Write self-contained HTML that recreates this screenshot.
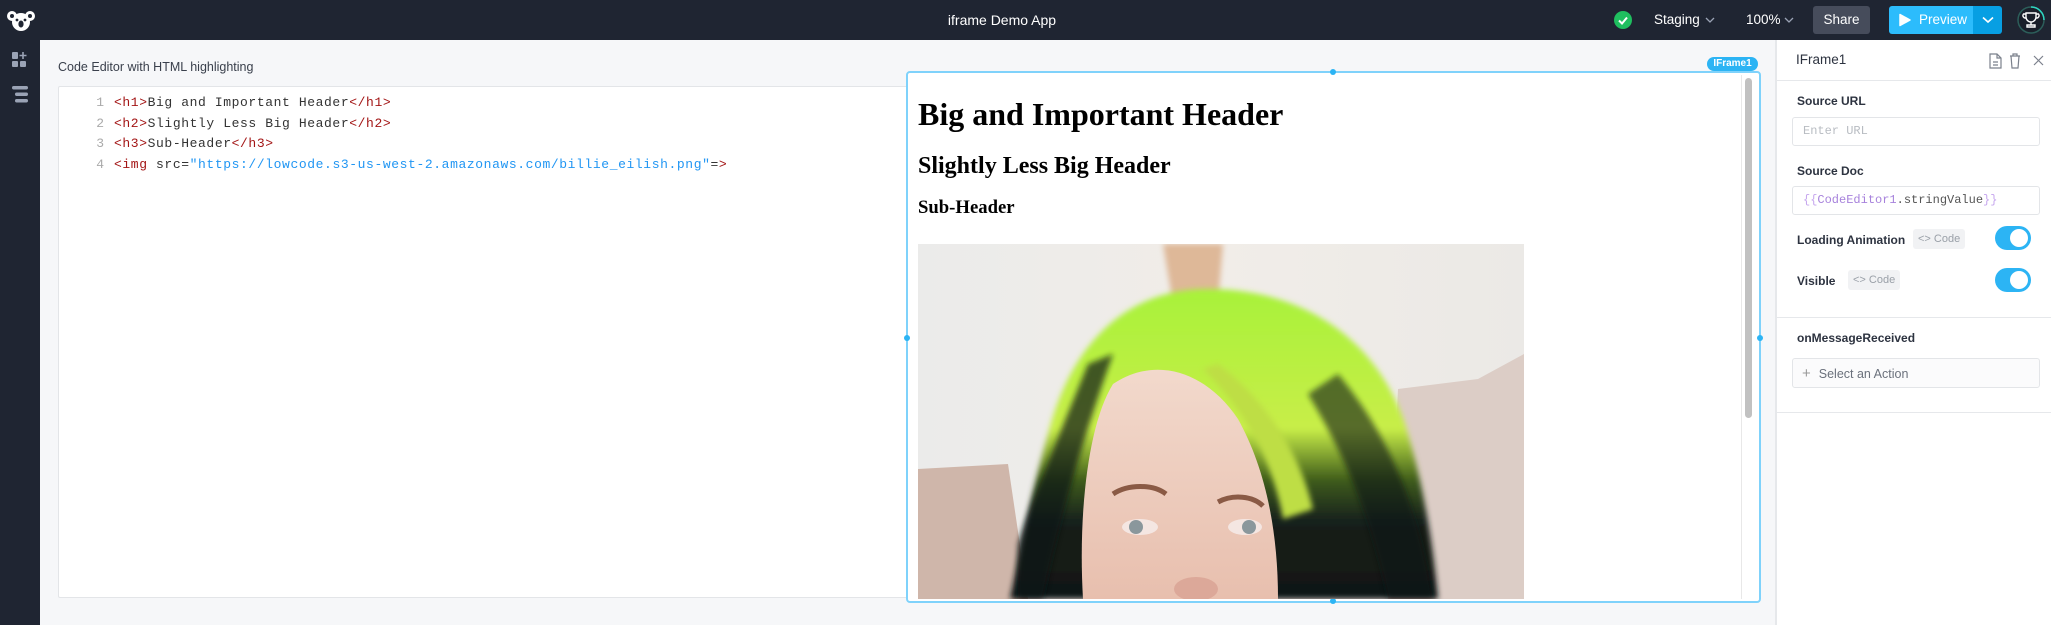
<!DOCTYPE html>
<html><head><meta charset="utf-8"><style>
*{box-sizing:border-box;margin:0;padding:0}
body{width:2051px;height:625px;overflow:hidden;background:#f6f7f9;font-family:"Liberation Sans",sans-serif;position:relative}
.a{position:absolute}
.top{left:0;top:0;width:2051px;height:40px;background:#1f2532}
.side{left:0;top:40px;width:40px;height:585px;background:#1f2532}
.tw{color:#fff;font-size:14px}
.code{font-family:"Liberation Mono",monospace;font-size:13px;line-height:20.5px;letter-spacing:0.6px}
.ln{color:#aaa;display:inline-block;width:14px;text-align:right;margin-right:10px;letter-spacing:0}
.t{color:#a31515}.s{color:#2196f3}
.lab{font-size:12px;color:#2d3340;font-weight:bold}
.inp{border:1px solid #e3e5e8;border-radius:3px;background:#fff}
.chip{background:#f1f2f4;border-radius:3px;color:#9aa0a8;font-size:11px;height:20px;line-height:20px;padding:0 5px}
.tog{width:36px;height:24px;border-radius:12px;background:#2cb4f4}
.tog::after{content:"";position:absolute;right:3px;top:3px;width:18px;height:18px;border-radius:50%;background:#fff}
.hd{width:6px;height:6px;border-radius:50%;background:#2cb4f4}
</style></head><body>
<div class="a top"></div>
<div class="a side"></div>
<svg class="a" style="left:7px;top:10px" width="28" height="22" viewBox="0 0 28 22"><circle cx="5" cy="6" r="5" fill="#fff"/><circle cx="23" cy="6" r="5" fill="#fff"/><ellipse cx="14" cy="12" rx="9" ry="9" fill="#fff"/><circle cx="5" cy="6" r="2" fill="#1f2532"/><circle cx="23" cy="6" r="2" fill="#1f2532"/><circle cx="10" cy="10" r="1.4" fill="#1f2532"/><circle cx="18" cy="10" r="1.4" fill="#1f2532"/><ellipse cx="14" cy="14" rx="2.6" ry="3.5" fill="#1f2532"/></svg>
<svg class="a" style="left:12px;top:52px" width="16" height="16" viewBox="0 0 16 16" fill="#9aa3b5"><rect x="0" y="0" width="6" height="7" rx="1"/><rect x="0" y="9" width="6" height="6" rx="1"/><rect x="8" y="9" width="6" height="6" rx="1"/><path d="M11 0v7M7.5 3.5h7" stroke="#9aa3b5" stroke-width="1.6"/></svg>
<svg class="a" style="left:12px;top:86px" width="16" height="18" viewBox="0 0 16 18" fill="#9aa3b5"><rect x="0" y="0" width="16" height="3.5" rx="1.7"/><rect x="3" y="6.5" width="13" height="3.5" rx="1.7"/><rect x="3" y="13" width="13" height="3.5" rx="1.7"/></svg>
<div class="a tw" style="left:0;width:2004px;top:12px;text-align:center">iframe Demo App</div>
<svg class="a" style="left:1614px;top:11px" width="18" height="18"><circle cx="9" cy="9" r="9" fill="#1fbf5f"/><path d="M5 9.5l3 3 5-6" stroke="#fff" stroke-width="2" fill="none"/></svg>
<div class="a tw" style="left:1654px;top:12px;font-size:13.5px">Staging</div>
<svg class="a" style="left:1705px;top:16px" width="10" height="8"><path d="M1 2l4 4 4-4" stroke="#9aa3b5" fill="none" stroke-width="1.3"/></svg>
<div class="a tw" style="left:1746px;top:12px;font-size:13.5px">100%</div>
<svg class="a" style="left:1784px;top:16px" width="10" height="8"><path d="M1 2l4 4 4-4" stroke="#9aa3b5" fill="none" stroke-width="1.3"/></svg>
<div class="a tw" style="left:1813px;top:6px;width:57px;height:28px;background:#464c5b;border-radius:3px;text-align:center;line-height:28px;font-size:13.5px">Share</div>
<div class="a" style="left:1889px;top:6px;width:84px;height:28px;background:#2cbcfc;border-radius:3px 0 0 3px"></div>
<div class="a" style="left:1973px;top:6px;width:29px;height:28px;background:#079fe3;border-radius:0 3px 3px 0"></div>
<svg class="a" style="left:1899px;top:13px" width="12" height="14"><path d="M1 1.5l10 5.5-10 5.5z" fill="#fff" stroke="#fff" stroke-linejoin="round" stroke-width="1.5"/></svg>
<div class="a tw" style="left:1919px;top:12px;font-size:13.5px">Preview</div>
<svg class="a" style="left:1982px;top:16px" width="12" height="8"><path d="M1 1.5l5 4.5 5-4.5" stroke="#fff" fill="none" stroke-width="1.6"/></svg>
<svg class="a" style="left:2016px;top:5px" width="30" height="30"><circle cx="15" cy="15" r="13" fill="#1a1f2a" stroke="#2c5e5a" stroke-width="1.5"/><path d="M15 2a13 13 0 0 1 13 13" stroke="#2ed6c1" stroke-width="1.5" fill="none"/><path d="M10 8h10v4a5 5 0 0 1-10 0zM10 9H7.5a2.5 2.5 0 0 0 2.5 4M20 9h2.5a2.5 2.5 0 0 1-2.5 4M15 17v3M11 22h8v-2h-8z" stroke="#fff" stroke-width="1.4" fill="none"/></svg>

<div class="a" style="left:58px;top:60px;color:#3a404c;font-size:12.5px">Code Editor with HTML highlighting</div>
<div class="a" style="left:58px;top:86px;width:860px;height:512px;background:#fff;border:1px solid #e3e5e8;border-radius:2px"></div>
<div class="a code" style="left:90px;top:93px;color:#333">
<div><span class="ln">1</span><span class="t">&lt;h1&gt;</span>Big and Important Header<span class="t">&lt;/h1&gt;</span></div>
<div><span class="ln">2</span><span class="t">&lt;h2&gt;</span>Slightly Less Big Header<span class="t">&lt;/h2&gt;</span></div>
<div><span class="ln">3</span><span class="t">&lt;h3&gt;</span>Sub-Header<span class="t">&lt;/h3&gt;</span></div>
<div><span class="ln">4</span><span class="t">&lt;img</span> src=<span class="s">"https://lowcode.s3-us-west-2.amazonaws.com/billie_eilish.png"</span>=<span class="t">&gt;</span></div>
</div>

<div class="a" style="left:906px;top:71px;width:855px;height:532px;border:2px solid #7fd2fb;border-radius:4px;background:#fff"></div>
<div class="a" style="left:1707px;top:57px;width:51px;height:14px;background:#2cb4f4;border-radius:7px;color:#fff;font-size:10px;text-align:center;line-height:14px;font-weight:bold">IFrame1</div>
<div class="a hd" style="left:1330px;top:69px"></div>
<div class="a hd" style="left:1330px;top:598px"></div>
<div class="a hd" style="left:904px;top:335px"></div>
<div class="a hd" style="left:1757px;top:335px"></div>
<div class="a" style="left:1741px;top:75px;width:1px;height:524px;background:#e8e8e8"></div>
<div class="a" style="left:1745px;top:78px;width:7px;height:340px;background:#c1c1c1;border-radius:4px"></div>
<div class="a" style="left:918px;top:94px;font-family:'Liberation Serif',serif;font-weight:bold;color:#000">
<div style="font-size:32px;line-height:40px">Big and Important Header</div>
<div style="font-size:24px;margin-top:17px;line-height:30px">Slightly Less Big Header</div>
<div style="font-size:18.7px;margin-top:15px;line-height:24px">Sub-Header</div>
</div>
<svg class="a" style="left:918px;top:244px" width="606" height="355" viewBox="0 0 606 355">
<defs>
<linearGradient id="bg" x1="0" y1="0" x2="1" y2="0"><stop offset="0" stop-color="#ebebea"/><stop offset=".5" stop-color="#f1ede8"/><stop offset="1" stop-color="#ebe9e6"/></linearGradient>
<linearGradient id="hg" x1="0" y1="0" x2="0" y2="1"><stop offset="0" stop-color="#a8f23a"/><stop offset=".45" stop-color="#c8ee48"/><stop offset=".62" stop-color="#3d5a1a"/><stop offset=".75" stop-color="#17201a"/><stop offset="1" stop-color="#101614"/></linearGradient>
<linearGradient id="fg" x1="0" y1="0" x2="0" y2="1"><stop offset="0" stop-color="#f2d9cc"/><stop offset="1" stop-color="#e8bfae"/></linearGradient>
<filter id="bl"><feGaussianBlur stdDeviation="3"/></filter>
</defs>
<rect width="606" height="355" fill="url(#bg)"/>
<path d="M0 225 L90 220 L110 355 L0 355Z" fill="#cfb6aa"/>
<path d="M480 145 L560 135 L606 110 L606 355 L470 355Z" fill="#dccdc6"/>
<path d="M245 0 L305 0 L300 60 L255 60Z" fill="#deb898" filter="url(#bl)"/>
<path d="M290 45 C200 45 150 110 130 190 C110 260 100 320 92 355 L520 355 C515 300 505 240 490 190 C465 100 390 45 290 45Z" fill="url(#hg)" filter="url(#bl)"/>
<path d="M100 300 C120 240 150 170 170 120 L195 110 C170 180 145 260 125 355 L100 355Z" fill="#0f1512" opacity=".7" filter="url(#bl)"/>
<path d="M390 150 C420 200 450 260 470 355 L515 355 C500 260 470 190 420 130Z" fill="#101712" opacity=".6" filter="url(#bl)"/>
<path d="M195 140 C240 110 290 130 320 175 C345 220 360 280 360 355 L165 355 C160 270 170 180 195 140Z" fill="url(#fg)"/>
<path d="M285 125 C330 170 355 220 365 275 L395 265 C380 200 340 150 300 120Z" fill="#bede44" filter="url(#bl)"/>
<path d="M195 250 C210 240 235 240 248 250" stroke="#8a5a45" stroke-width="5" fill="none"/>
<path d="M300 258 C315 250 335 252 345 262" stroke="#8a5a45" stroke-width="5" fill="none"/>
<ellipse cx="222" cy="283" rx="18" ry="8" fill="#f4e6e2"/><circle cx="218" cy="283" r="7" fill="#8a979c"/>
<ellipse cx="327" cy="283" rx="17" ry="8" fill="#f4e6e2"/><circle cx="331" cy="283" r="7" fill="#8a979c"/>
<ellipse cx="278" cy="345" rx="22" ry="12" fill="#dca899"/>
</svg>

<div class="a" style="left:1775px;top:40px;width:276px;height:585px;background:#fff;border-left:2px solid #e6e8eb"></div>
<div class="a" style="left:1796px;top:52px;font-size:13.5px;color:#2d3340">IFrame1</div>
<svg class="a" style="left:1988px;top:53px" width="60" height="16" fill="none" stroke="#7b818c" stroke-width="1.2"><path d="M2 1h7l4 4v10H2zM9 1v4h4M5 9h5M5 12h5"/><path d="M22 3h10M25 3V1h4v2M23 3l1 12h6l1-12"/><path d="M46 3l9 9M55 3l-9 9"/></svg>
<div class="a" style="left:1777px;top:80px;width:274px;height:1px;background:#e6e8eb"></div>
<div class="a lab" style="left:1797px;top:94px">Source URL</div>
<div class="a inp" style="left:1792px;top:117px;width:248px;height:29px"></div>
<div class="a" style="left:1803px;top:124px;font-family:'Liberation Mono',monospace;font-size:12px;color:#b8bcc2">Enter URL</div>
<div class="a lab" style="left:1797px;top:164px">Source Doc</div>
<div class="a inp" style="left:1792px;top:186px;width:248px;height:29px"></div>
<div class="a" style="left:1803px;top:193px;font-family:'Liberation Mono',monospace;font-size:12px;color:#555"><span style="color:#c6a6ee">{{</span><span style="color:#a782dc">CodeEditor1</span>.stringValue<span style="color:#c6a6ee">}}</span></div>
<div class="a lab" style="left:1797px;top:233px">Loading Animation</div>
<div class="a chip" style="left:1913px;top:229px">&lt;&gt; Code</div>
<div class="a tog" style="left:1995px;top:226px"></div>
<div class="a lab" style="left:1797px;top:274px">Visible</div>
<div class="a chip" style="left:1848px;top:270px">&lt;&gt; Code</div>
<div class="a tog" style="left:1995px;top:268px"></div>
<div class="a" style="left:1777px;top:317px;width:274px;height:1px;background:#e6e8eb"></div>
<div class="a lab" style="left:1797px;top:331px">onMessageReceived</div>
<div class="a inp" style="left:1792px;top:358px;width:248px;height:30px;background:#fbfbfc"></div>
<div class="a" style="left:1802px;top:365px;font-size:12.5px;color:#6b717c"><span style="color:#999;font-size:15px;margin-right:8px">+</span>Select an Action</div>
<div class="a" style="left:1777px;top:412px;width:274px;height:1px;background:#e6e8eb"></div>
</body></html>
